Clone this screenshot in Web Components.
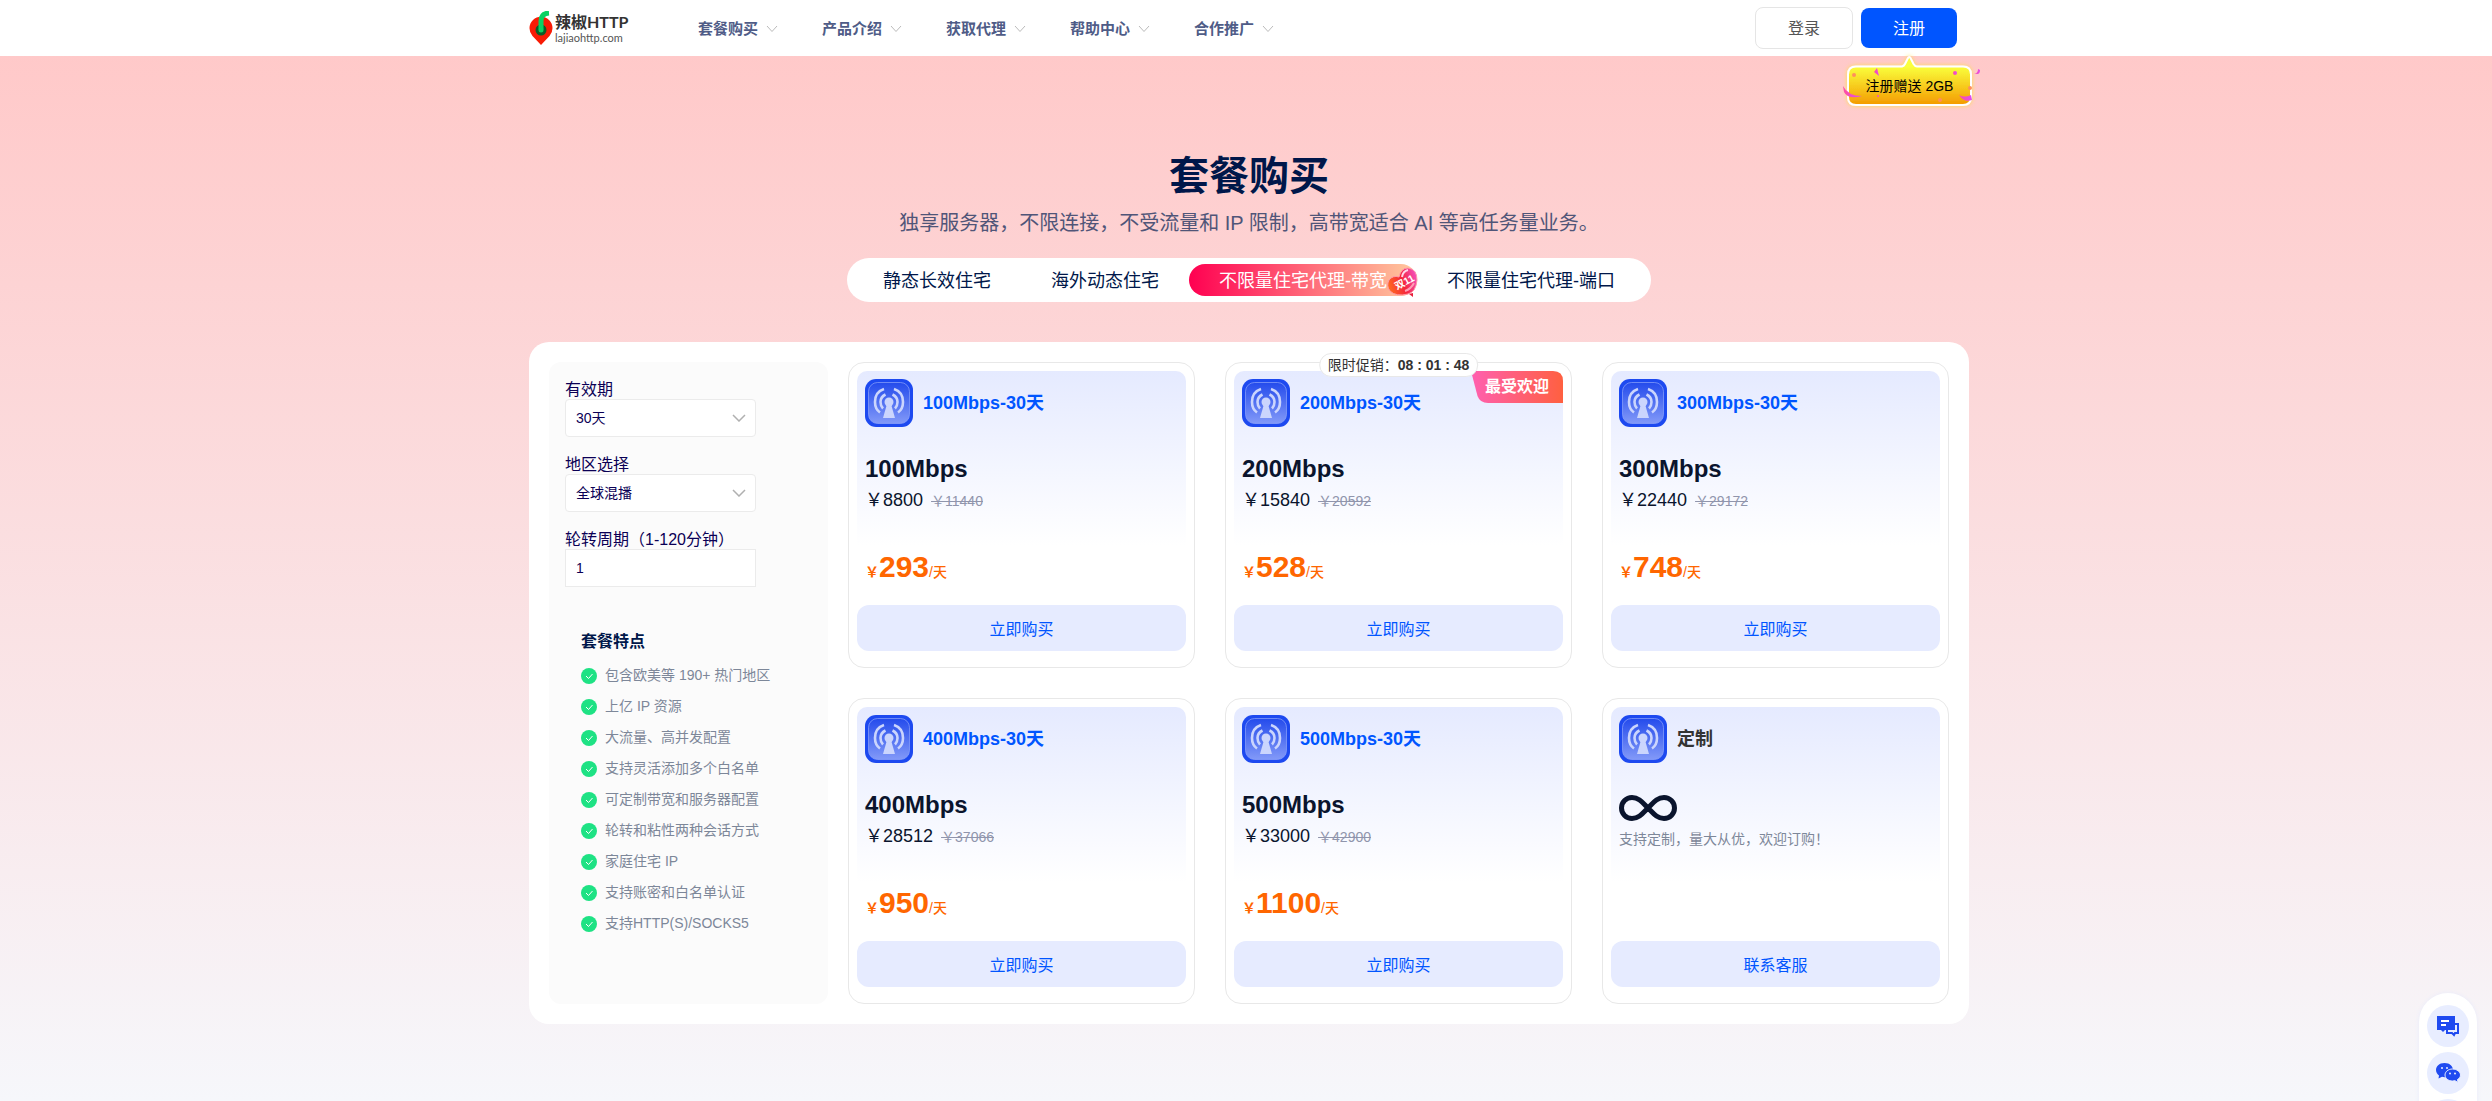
<!DOCTYPE html>
<html lang="zh-CN">
<head>
<meta charset="utf-8">
<meta name="viewport" content="width=device-width, initial-scale=1">
<title>套餐购买 - 辣椒HTTP</title>
<style>
  body {
    margin: 0;
    font-family: "Liberation Sans", "Noto Sans CJK SC", sans-serif;
    font-size: 14px;
    color: #00174a;
    background: #f6f7fb;
  }
</style>
</head>
<body>
<pricing-page>
  <site-header slot="header">
    <nav-item>套餐购买</nav-item>
    <nav-item>产品介绍</nav-item>
    <nav-item>获取代理</nav-item>
    <nav-item>帮助中心</nav-item>
    <nav-item>合作推广</nav-item>
  </site-header>
  <page-title>
    套餐购买
    <span slot="lead">独享服务器，不限连接，不受流量和 IP 限制，高带宽适合 AI 等高任务量业务。</span>
  </page-title>
  <plan-tabs>
    <plan-tab>静态长效住宅</plan-tab>
    <plan-tab>海外动态住宅</plan-tab>
    <plan-tab active>不限量住宅代理-带宽</plan-tab>
    <plan-tab>不限量住宅代理-端口</plan-tab>
  </plan-tabs>
  <plan-panel>
    <plan-filters slot="side"></plan-filters>
    <plan-card name="100Mbps-30天" speed="100Mbps" price="8800" old="11440" daily="293"></plan-card>
    <plan-card name="200Mbps-30天" speed="200Mbps" price="15840" old="20592" daily="528" hot></plan-card>
    <plan-card name="300Mbps-30天" speed="300Mbps" price="22440" old="29172" daily="748"></plan-card>
    <plan-card name="400Mbps-30天" speed="400Mbps" price="28512" old="37066" daily="950"></plan-card>
    <plan-card name="500Mbps-30天" speed="500Mbps" price="33000" old="42900" daily="1100"></plan-card>
    <plan-card name="定制" custom></plan-card>
  </plan-panel>
  <float-tools slot="tools"></float-tools>
</pricing-page>

<script>
class BaseElement extends HTMLElement {
  constructor() {
    super();
    this.attachShadow({ mode: "open" });
  }
  connectedCallback() {
    this.shadowRoot.innerHTML = this.render();
  }
}

class PricingPage extends BaseElement {
  render() {
    return `
      <style>
        :host {
          display: block;
          min-height: 100vh;
          background: linear-gradient(#ffc9c9 5%, #f6f7fb 100%);
        }
        main {
          display: flex;
          flex-direction: column;
          align-items: center;
          padding: 90px 0 77px 6px;
        }
      </style>
      <slot name="header"></slot>
      <main><slot></slot></main>
      <slot name="tools"></slot>
    `;
  }
}

class SiteHeader extends BaseElement {
  render() {
    return `
      <style>
        :host { display: block; background: #fff; padding-left: 6px; }
        header {
          display: flex;
          align-items: center;
          max-width: 1440px;
          height: 56px;
          margin: 0 auto;
        }
        .logo {
          display: flex;
          align-items: center;
          gap: 2px;
          width: 169px;
          color: #333;
          text-decoration: none;
        }
        .logo span { display: block; font-family: Lato, "Noto Sans CJK SC", sans-serif; }
        .name { font-size: 16px; line-height: 19px; font-weight: 700; }
        .site { font-size: 11px; line-height: 14px; color: #555; }
        nav { display: flex; gap: 44px; flex: 1; padding-top: 1px; }
        .actions {
          position: relative;
          display: flex;
          align-items: center;
          gap: 8px;
          padding-right: 12px;
        }
        button {
          box-sizing: border-box;
          width: 96px;
          height: 40px;
          padding: 0 0 2px;
          border: 0;
          border-radius: 8px;
          font: inherit;
          font-size: 16px;
          color: #fff;
          background: #0055ff;
        }
        .login { width: 98px; height: 42px; border: 1px solid #e5e5e5; background: #fff; color: #555; }
        .gift {
          position: absolute;
          top: 45px;
          right: -13px;
          display: grid;
          place-items: center;
          color: #000;
          line-height: 20px;
        }
        .gift > * { grid-area: 1 / 1; }
        .gift span { padding: 5px 3px 0 0; }
      </style>
      <header>
        <a class="logo" href="#">
          <svg width="24" height="34" viewBox="0 0 24 34">
            <path d="M12 34L3.500 25A11.500 11.500 0 1 1 20.500 25Z" fill="#f81b05"/>
            <circle cx="12" cy="19" r="5.500" fill="#0a5d28"/>
            <path d="M12 18.500V10Q12 2.500 20 2" fill="none" stroke="#0bd162" stroke-width="5"/>
            <circle cx="12" cy="19" r="2.500" fill="#0bd162"/>
          </svg>
          <div><span class="name">辣椒HTTP</span><span class="site">lajiaohttp.com</span></div>
        </a>
        <nav><slot></slot></nav>
        <div class="actions">
          <button class="login">登录</button>
          <button>注册</button>
          <div class="gift">
            <svg width="142" height="62" viewBox="0 0 142 62">
              <defs>
                <linearGradient id="gold" x2="0" y2="1">
                  <stop offset=".2" stop-color="#faff3c"/>
                  <stop offset="1" stop-color="#f49a00"/>
                </linearGradient>
                <linearGradient id="ribbon">
                  <stop stop-color="#ff4fa0"/>
                  <stop offset="1" stop-color="#e04cf0"/>
                </linearGradient>
                <filter id="glow" x="-10%" y="-20%" width="120%" height="140%">
                  <feDropShadow dx="0" dy="0" stdDeviation="2" flood-color="#ffe04a"/>
                </filter>
              </defs>
              <path d="M16 14.500H62Q64 14 65 12L68 6Q69 4 70.500 6L73.500 12Q75 14.500 77 14.500H123Q131 14.500 131 22.500V45Q131 53 123 53H16Q8 53 8 45V22.500Q8 14.500 16 14.500Z" fill="url(#gold)" stroke="#fff" stroke-width="2" filter="url(#glow)"/>
              <g fill="url(#ribbon)">
                <path d="M3 34Q8 44 22 44Q8 48 4 40Z"/>
                <path d="M119 43Q125 46 131 43L132 48Q124 51 119 43Z"/>
                <path d="M34 20L37 16L39 24Z"/>
                <path d="M134 21Q138 22 138 17L140 18Q140 24 134 21Z"/>
                <circle cx="115" cy="21" r="2"/><circle cx="38" cy="44" r="1"/>
              </g>
              <g fill="#ff8f5c"><circle cx="14" cy="23" r="2"/><circle cx="100" cy="48" r="2"/><circle cx="130" cy="36" r="2"/></g>
            </svg>
            <span>注册赠送 2GB</span>
          </div>
        </div>
      </header>
    `;
  }
}

class NavItem extends BaseElement {
  render() {
    return `
      <style>
        :host { display: block; }
        a {
          display: flex;
          align-items: center;
          gap: 8px;
          font-size: 15px;
          font-weight: 700;
          line-height: 24px;
          color: #4f5c87;
          text-decoration: none;
        }
      </style>
      <a href="#"><slot></slot>
        <svg width="12" height="8" viewBox="0 0 12 8"><path d="M1 1L6 6.500L11 1" fill="none" stroke="#bbb"/></svg>
      </a>
    `;
  }
}

class PageTitle extends BaseElement {
  render() {
    return `
      <style>
        :host { display: block; text-align: center; }
        h1 { margin: 0; font-size: 40px; line-height: 60px; font-weight: 700; color: #00174a; }
        p { margin: 2px 0 20px; font-size: 20px; line-height: 30px; color: #505578; }
      </style>
      <h1><slot></slot></h1>
      <p><slot name="lead"></slot></p>
    `;
  }
}

class PlanTabs extends BaseElement {
  render() {
    return `
      <style>
        :host {
          display: flex;
          padding: 6px;
          margin-bottom: 40px;
          border-radius: 22px;
          background: #fff;
        }
      </style>
      <slot></slot>
    `;
  }
}

class PlanTab extends BaseElement {
  render() {
    return `
      <style>
        :host { display: block; position: relative; }
        button {
          height: 32px;
          padding: 0 30px 2px;
          border: 0;
          border-radius: 16px;
          font: inherit;
          font-size: 18px;
          color: #00174a;
          background: none;
        }
        :host([active]) button {
          color: #fff;
          background: linear-gradient(90deg, #ff0051, #ffcb9e);
        }
        svg { position: absolute; right: -1px; top: 2px; }
      </style>
      <button><slot></slot></button>
      ${this.hasAttribute("active") ? `
      <svg width="32" height="32" viewBox="0 0 32 32">
        <defs>
          <linearGradient id="heart" x1="0" y1=".6" x2="1" y2=".3">
            <stop stop-color="#ff6a1f"/>
            <stop offset=".5" stop-color="#f5263c"/>
            <stop offset="1" stop-color="#f44fc0"/>
          </linearGradient>
        </defs>
        <path d="M13 11Q15 2 22 2Q31 3 31 14Q30 26 22 28Q10 31 4 25Q0 20 3 14Q7 9 13 11Z" fill="url(#heart)" stroke="#ff9aa8"/>
        <path d="M16 11Q17 5 22 4" fill="none" stroke="#ffd5e8" stroke-width="2"/>
        <path d="M19 25Q25 23 28 17" fill="none" stroke="#ff9fb4" stroke-width="2"/>
        <path d="M23 28L27 27V31Z" fill="#e8203c"/>
        <text x="11" y="24" font-size="10" font-weight="700" fill="#fff" transform="rotate(-28 11 24)">双11</text>
      </svg>` : ""}
    `;
  }
}

class PlanPanel extends BaseElement {
  render() {
    return `
      <style>
        :host {
          box-sizing: border-box;
          display: flex;
          gap: 20px;
          width: 100%;
          max-width: 1440px;
          padding: 20px;
          border-radius: 20px;
          background: #fff;
        }
        .grid {
          flex: 1;
          display: grid;
          grid-template-columns: repeat(3, 1fr);
          gap: 30px;
        }
      </style>
      <slot name="side"></slot>
      <div class="grid"><slot></slot></div>
    `;
  }
}

const features = [
  "包含欧美等 190+ 热门地区",
  "上亿 IP 资源",
  "大流量、高并发配置",
  "支持灵活添加多个白名单",
  "可定制带宽和服务器配置",
  "轮转和粘性两种会话方式",
  "家庭住宅 IP",
  "支持账密和白名单认证",
  "支持HTTP(S)/SOCKS5",
];

class PlanFilters extends BaseElement {
  render() {
    const arrow = `<svg width="14" height="8" viewBox="0 0 14 8"><path d="M1 1L7 7L13 1" fill="none" stroke="#b0b0b0" stroke-width="1.500"/></svg>`;
    return `
      <style>
        :host {
          box-sizing: border-box;
          display: block;
          width: 279px;
          padding: 15px 16px;
          border-radius: 12px;
          background: #fbfbfb;
        }
        .field { width: 191px; margin-bottom: 15px; }
        label { display: block; padding-top: 4px; font-size: 16px; line-height: 18px; color: #0b0055; }
        .select { display: grid; align-items: center; }
        .select > * { grid-area: 1 / 1; }
        .select svg { justify-self: end; margin-right: 10px; pointer-events: none; }
        select, input {
          box-sizing: border-box;
          display: block;
          width: 100%;
          height: 38px;
          padding: 0 10px;
          border: 1px solid #ebebeb;
          border-radius: 4px;
          font: inherit;
          color: #0b0055;
          background: #fff;
          appearance: none;
        }
        input { border-radius: 0; }
        section { padding: 28px 16px 0; }
        h2 { margin: 0 0 6px; font-size: 16px; line-height: 24px; }
        ul { margin: 0; padding: 0; list-style: none; }
        li { display: flex; align-items: center; gap: 8px; line-height: 31px; color: #7d8799; }
      </style>
      <div class="field">
        <label for="days">有效期</label>
        <div class="select"><select id="days"><option>30天</option></select>${arrow}</div>
      </div>
      <div class="field">
        <label for="area">地区选择</label>
        <div class="select"><select id="area"><option>全球混播</option></select>${arrow}</div>
      </div>
      <div class="field">
        <label for="cycle">轮转周期（1-120分钟）</label>
        <input id="cycle" value="1">
      </div>
      <section>
        <h2>套餐特点</h2>
        <ul>
          ${features.map((text) => `
          <li>
            <svg width="16" height="16" viewBox="0 0 16 16"><circle cx="8" cy="8" r="8" fill="#1ee284"/><path d="M5 8L7.500 10.500L11.500 6" fill="none" stroke="#fff"/></svg>
            ${text}
          </li>`).join("")}
        </ul>
      </section>
    `;
  }
}

class PlanCard extends BaseElement {
  get details() {
    if (this.hasAttribute("custom")) {
      return `
        <svg class="infinity" width="58" height="26" viewBox="0 0 58 26">
          <path d="M29 13C24 8 20 2.500 13 2.500A10.500 10.500 0 0 0 13 23.500C20 23.500 24 18 29 13C34 8 38 2.500 45 2.500A10.500 10.500 0 0 1 45 23.500C38 23.500 34 18 29 13Z" fill="none" stroke="#0a142d" stroke-width="5"/>
        </svg>
        <p class="note">支持定制，量大从优，欢迎订购！</p>
      `;
    }
    return `
      <h3>${this.getAttribute("speed")}</h3>
      <p class="price">￥${this.getAttribute("price")}<del>￥${this.getAttribute("old")}</del></p>
      <p class="daily">￥<b>${this.getAttribute("daily")}</b><span>/天</span></p>
    `;
  }
  get badges() {
    if (!this.hasAttribute("hot")) return "";
    return `
      <div class="timer">限时促销：<b>08 : 01 : 48</b></div>
      <div class="hot">
        <svg width="92" height="32" viewBox="0 0 92 32" preserveAspectRatio="none">
          <defs><linearGradient id="hot"><stop stop-color="#ff5fb0"/><stop offset="1" stop-color="#ff6040"/></linearGradient></defs>
          <path d="M0 0H82Q92 0 92 10V32H17Q9 32 6.500 25Z" fill="url(#hot)"/>
        </svg>
        <span>最受欢迎</span>
      </div>
    `;
  }
  render() {
    const custom = this.hasAttribute("custom");
    return `
      <style>
        :host {
          position: relative;
          display: flex;
          flex-direction: column;
          padding: 8px 8px 16px;
          border: 1px solid #e8e8e8;
          border-radius: 16px;
        }
        .body {
          flex: 1;
          padding: 8px 8px 18px;
          border-radius: 10px;
          background: linear-gradient(#e5eaff, #fff 175px);
        }
        .head { display: flex; align-items: center; gap: 10px; margin-bottom: 26px; }
        h2 { margin: 0; font-size: 18px; line-height: 28px; color: #0055ff; }
        :host([custom]) h2 { color: #333; }
        h3 { margin: 0; font-size: 24px; line-height: 32px; color: #0a142d; }
        p { margin: 0; }
        .price { padding-top: 1px; font-size: 18px; line-height: 28px; color: #0a142d; }
        del { margin-left: 8px; font-size: 14px; line-height: 20px; color: #9095ac; }
        .daily { margin-top: 33px; line-height: 20px; font-weight: 700; color: #ff6600; }
        .daily b { font-size: 30px; line-height: 40px; }
        .daily span { font-weight: 500; }
        .infinity { display: block; margin-top: 32px; }
        .note { margin-top: 7px; line-height: 22px; color: #7d8799; }
        button {
          height: 46px;
          border: 0;
          border-radius: 12px;
          font: inherit;
          font-size: 16px;
          color: #0055ff;
          background: #e6ebff;
        }
        .timer {
          position: absolute;
          top: -10px;
          left: 50%;
          transform: translateX(-50%);
          z-index: 1;
          padding: 0 8px;
          border: 1px solid #e8e8e8;
          border-radius: 12px;
          line-height: 22px;
          white-space: nowrap;
          color: #333;
          background: #fff;
        }
        .hot {
          position: absolute;
          top: 8px;
          right: 8px;
          display: grid;
          place-items: center;
          font-size: 16px;
          font-weight: 700;
          line-height: 30px;
          color: #fff;
        }
        .hot > * { grid-area: 1 / 1; }
      </style>
      <div class="body">
        <div class="head">
          <svg width="48" height="48" viewBox="0 0 48 48">
            <defs><linearGradient id="tile" x2="0" y2="1"><stop stop-color="#244bec"/><stop offset="1" stop-color="#8299f8"/></linearGradient></defs>
            <rect width="48" height="48" rx="11" fill="#1d49f0"/>
            <rect x="3.500" y="3.500" width="41" height="41" rx="9" fill="url(#tile)" stroke="#8fa4fa" stroke-opacity=".7"/>
            <g fill="none" stroke="#cbd5fd" stroke-width="2.600">
              <path d="M19 10Q10 13 10 23Q10 30 15 33.500"/>
              <path d="M29 10Q38 13 38 23Q38 30 33 33.500"/>
              <path d="M20.500 15.500Q15.500 18 15.500 23Q15.500 27 18 29.500"/>
              <path d="M27.500 15.500Q32.500 18 32.500 23Q32.500 27 30 29.500"/>
            </g>
            <circle cx="24" cy="23" r="4.500" fill="#cbd5fd"/>
            <path d="M22 25H26L30 39H18Z" fill="#cbd5fd"/>
          </svg>
          <h2>${this.getAttribute("name")}</h2>
        </div>
        ${this.details}
      </div>
      <button>${custom ? "联系客服" : "立即购买"}</button>
      ${this.badges}
    `;
  }
}

class FloatTools extends BaseElement {
  render() {
    return `
      <style>
        :host {
          position: fixed;
          right: 15px;
          bottom: -52px;
          display: flex;
          flex-direction: column;
          gap: 5px;
          padding: 12px 8px;
          border-radius: 29px;
          background: #fff;
          box-shadow: 0 0 4px #e8ebfa;
        }
        button {
          display: grid;
          place-items: center;
          width: 42px;
          height: 42px;
          padding: 0;
          border: 0;
          border-radius: 50%;
          background: #e8edff;
        }
      </style>
      <button aria-label="在线客服">
        <svg width="24" height="22" viewBox="0 0 24 22">
          <path d="M11 9H22V18H19L18 20L16 18H11Z" fill="#e8edff" stroke="#1f4af0" stroke-width="2"/>
          <path d="M1 1H19V15H9L7 17L5 15H1Z" fill="#1f4af0"/>
          <path d="M5 6H13M5 10H10" stroke="#fff" stroke-width="2"/>
        </svg>
      </button>
      <button aria-label="微信">
        <svg width="26" height="22" viewBox="0 0 26 22">
          <path d="M9.500 1C4 1 1 4.500 1 8C1 10.500 2.500 12.500 4 13.500L3.500 16.500L7 14.800Q10 15.500 12 14.800C17 14 18 10 18 8C18 4.500 15 1 9.500 1Z" fill="#1f4af0"/>
          <path d="M17.500 7C13 7 10 10 10 13C10 16.500 13.500 19 17.500 19L20 18.700L23 20.500L22.500 17.500C24 16.500 25.500 15 25.500 13C25.500 10 22 7 17.500 7Z" fill="#1f4af0" stroke="#e8edff"/>
          <g fill="#e8edff"><circle cx="7" cy="6" r="1"/><circle cx="12" cy="6" r="1"/><circle cx="15" cy="11.500" r="1"/><circle cx="20" cy="11.500" r="1"/></g>
        </svg>
      </button>
      <button aria-label="返回顶部"></button>
    `;
  }
}

customElements.define("pricing-page", PricingPage);
customElements.define("site-header", SiteHeader);
customElements.define("nav-item", NavItem);
customElements.define("page-title", PageTitle);
customElements.define("plan-tabs", PlanTabs);
customElements.define("plan-tab", PlanTab);
customElements.define("plan-panel", PlanPanel);
customElements.define("plan-filters", PlanFilters);
customElements.define("plan-card", PlanCard);
customElements.define("float-tools", FloatTools);
</script>
</body>
</html>
